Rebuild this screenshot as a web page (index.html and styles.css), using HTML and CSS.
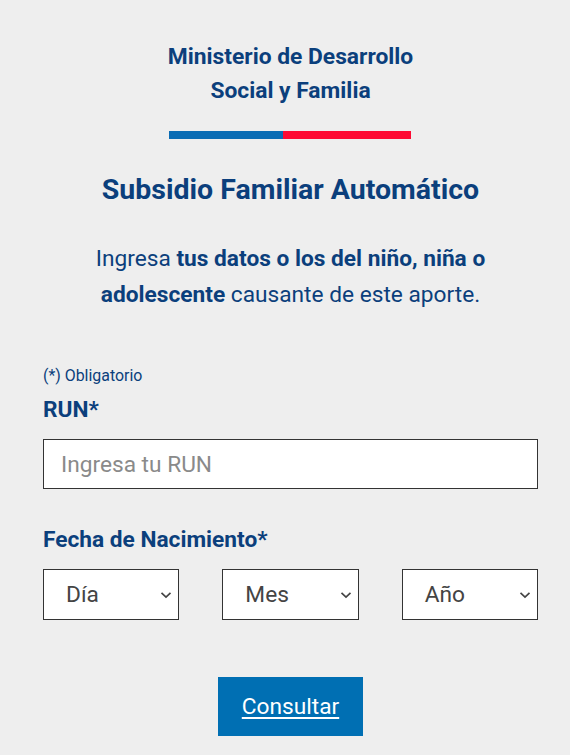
FILE: index.html
```html
<!DOCTYPE html>
<html lang="es">
<head>
<meta charset="utf-8">
<title>Subsidio Familiar Automático</title>
<link rel="stylesheet" href="styles.css">
</head>
<body>
<main class="page">
  <header class="brand">
    <div class="ministry">Ministerio de Desarrollo<br>Social y Familia</div>
    <div class="flagbar"><span class="blue"></span><span class="red"></span></div>
  </header>
  <h1 class="title">Subsidio Familiar Automático</h1>
  <p class="intro">Ingresa <strong>tus datos o los del niño, niña o adolescente</strong> causante de este aporte.</p>
  <form class="form">
    <div class="required-note">(*) Obligatorio</div>
    <label class="label" for="run">RUN*</label>
    <input class="input" id="run" type="text" placeholder="Ingresa tu RUN">
    <div class="label label-date">Fecha de Nacimiento*</div>
    <div class="date-row">
      <div class="select"><span>Día</span><svg class="chev" viewBox="0 0 12 8"><path d="M1.5 1.8 L6 6 L10.5 1.8" fill="none" stroke="#444" stroke-width="1.7"/></svg></div>
      <div class="select"><span>Mes</span><svg class="chev" viewBox="0 0 12 8"><path d="M1.5 1.8 L6 6 L10.5 1.8" fill="none" stroke="#444" stroke-width="1.7"/></svg></div>
      <div class="select"><span>Año</span><svg class="chev" viewBox="0 0 12 8"><path d="M1.5 1.8 L6 6 L10.5 1.8" fill="none" stroke="#444" stroke-width="1.7"/></svg></div>
    </div>
    <div class="actions"><a class="button" href="#">Consultar</a></div>
  </form>
</main>
</body>
</html>
```
FILE: styles.css
```css
* { box-sizing: border-box; }
html, body { margin: 0; padding: 0; }
body {
  background: #eeeeee;
  font-family: Roboto, "Liberation Sans", sans-serif;
  color: #0b3f7c;
}
.page {
  padding: 40px 32px 0 43px;
  display: flex;
  flex-direction: column;
  align-items: center;
}
.brand {
  display: flex;
  flex-direction: column;
  align-items: center;
}
.ministry {
  font-size: 22.8px;
  font-weight: 700;
  line-height: 34px;
  text-align: center;
  color: #0b3f7c;
}
.flagbar {
  display: flex;
  width: 242px;
  height: 8px;
  margin-top: 23px;
  margin-right: 1px;
}
.flagbar .blue { width: 114px; background: #0a6cb4; }
.flagbar .red { flex: 1; background: #fe0a33; }
.title {
  margin: 34px 0 0;
  font-size: 28.5px;
  font-weight: 700;
  line-height: 34px;
  text-align: center;
  color: #0b3f7c;
}
.intro {
  margin: 34px 0 0;
  font-size: 22.7px;
  line-height: 36px;
  text-align: center;
  color: #0b3f7c;
  width: 410px;
}
.intro strong { font-weight: 700; }
.form {
  align-self: stretch;
  margin-top: 52px;
  display: flex;
  flex-direction: column;
}
.required-note {
  font-size: 15.9px;
  line-height: 22px;
  color: #0b3f7c;
}
.label {
  font-size: 22.7px;
  font-weight: 700;
  line-height: 30px;
  color: #0b3f7c;
  margin-top: 8px;
}
.input {
  margin-top: 14px;
  height: 50px;
  border: 1px solid #333;
  background: #fff;
  padding: 0 17px;
  font-family: inherit;
  font-size: 22.7px;
  color: #444;
  outline: none;
  width: 100%;
}
.input::placeholder { color: #8a8a8a; }
.label-date { margin-top: 36px; }
.date-row {
  margin-top: 14px;
  display: grid;
  grid-template-columns: repeat(3, 1fr);
  column-gap: 43px;
}
.select {
  height: 51px;
  border: 1px solid #333;
  background: #fff;
  display: flex;
  align-items: center;
  justify-content: space-between;
  padding: 0 6px 0 22px;
  font-size: 22.7px;
  color: #444;
}
.chev { width: 12px; height: 8px; }
.actions {
  display: flex;
  justify-content: center;
  margin-top: 57px;
}
.button {
  display: inline-flex;
  align-items: center;
  justify-content: center;
  width: 145px;
  height: 59px;
  background: #006fb3;
  color: #fff;
  font-size: 22.7px;
  text-decoration: underline;
  text-underline-offset: 3px;
}
```
